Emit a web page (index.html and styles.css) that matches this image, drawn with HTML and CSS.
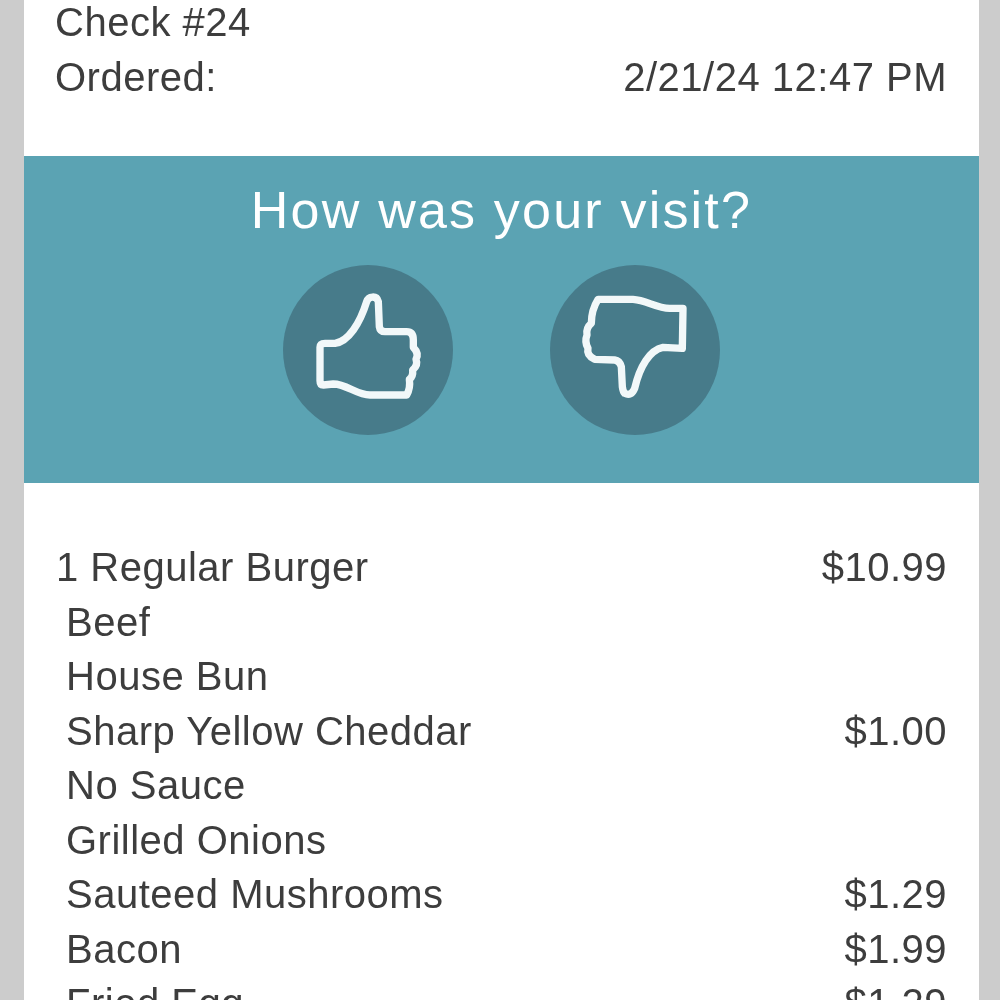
FILE: index.html
```html
<!DOCTYPE html>
<html lang="en">
<head>
<meta charset="utf-8">
<title>Check #24</title>
<link rel="stylesheet" href="styles.css">
</head>
<body>
<main class="receipt">
  <section class="meta">
    <div class="row"><span>Check #24</span></div>
    <div class="row"><span>Ordered:</span><span>2/21/24 12:47 PM</span></div>
  </section>
  <section class="feedback">
    <h1 class="question">How was your visit?</h1>
    <div class="choices">
      <button class="choice" aria-label="Thumbs up">
        <svg viewBox="39 15 510 510" class="thumb"><path d="M150 262 Q150 250 165 250 L195 250 C235 245 270 190 290 125 C295 108 320 105 325 125 L328 200 Q330 215 345 215 L410 215 Q430 215 430 240 L430 262 Q448 280 438 298 Q445 315 428 330 Q430 350 418 358 Q422 385 410 405 L300 405 C260 405 230 372 190 372 L160 375 Q150 375 150 362 Z"/></svg>
      </button>
      <button class="choice" aria-label="Thumbs down">
        <svg viewBox="841 15 510 510" class="thumb"><path d="M985 118 L1090 118 C1130 120 1160 145 1200 145 L1240 145 L1238 265 L1180 262 C1140 270 1110 320 1095 385 Q1085 410 1065 400 Q1060 395 1058 380 L1055 320 Q1050 302 1035 300 L975 298 Q950 285 955 265 Q944 245 952 225 Q948 205 965 190 Q965 150 985 118 Z"/></svg>
      </button>
    </div>
  </section>
  <section class="items">
    <div class="row main"><span>1 Regular Burger</span><span>$10.99</span></div>
    <div class="row mod"><span>Beef</span></div>
    <div class="row mod"><span>House Bun</span></div>
    <div class="row mod"><span>Sharp Yellow Cheddar</span><span>$1.00</span></div>
    <div class="row mod"><span>No Sauce</span></div>
    <div class="row mod"><span>Grilled Onions</span></div>
    <div class="row mod"><span>Sauteed Mushrooms</span><span>$1.29</span></div>
    <div class="row mod"><span>Bacon</span><span>$1.99</span></div>
    <div class="row mod"><span>Fried Egg</span><span>$1.29</span></div>
  </section>
</main>
</body>
</html>
```
FILE: styles.css
```css
html, body {
  margin: 0;
  height: 1000px;
  overflow: hidden;
  background: #cccccc;
}
.receipt {
  margin: -5px 21px 0 24px;
  background: #ffffff;
  color: #3d3d3d;
  font-family: "Liberation Sans", Arial, sans-serif;
  font-size: 40px;
  letter-spacing: 0.5px;
  filter: blur(0.4px);
}
.row {
  display: flex;
  justify-content: space-between;
  height: 54.5px;
  line-height: 54.5px;
  white-space: nowrap;
}
.meta {
  padding: 0 32px 52px 31px;
}
.feedback {
  height: 327px;
  background: #5ba3b3;
  display: flex;
  flex-direction: column;
  align-items: center;
}
.question {
  margin: 24px 0 0;
  height: 61px;
  line-height: 61px;
  font-size: 52px;
  font-weight: normal;
  letter-spacing: 2.2px;
  color: #ffffff;
}
.choices {
  display: flex;
  gap: 97px;
  margin-top: 24px;
  margin-right: 1px;
}
.choice {
  width: 170px;
  height: 170px;
  padding: 0;
  border: 0;
  border-radius: 50%;
  background: #477b8a;
}
.thumb {
  display: block;
  width: 170px;
  height: 170px;
  fill: none;
  stroke: #f2f8f9;
  stroke-width: 22;
  stroke-linejoin: round;
}
.items {
  padding: 57px 32px 0 32px;
}
.mod {
  padding-left: 10px;
}
```
